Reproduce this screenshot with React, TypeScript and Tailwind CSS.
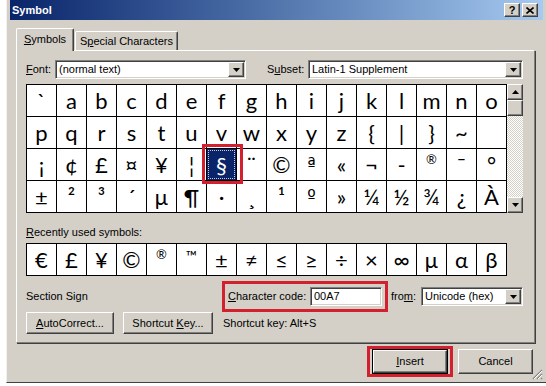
import React from 'react';

const sunken =
  'border border-t-[#808080] border-l-[#808080] border-b-white border-r-white shadow-[inset_1px_1px_0_#404040,inset_-1px_-1px_0_#d4d0c8]';
const raised =
  'border border-t-white border-l-white border-b-[#404040] border-r-[#404040] shadow-[inset_-1px_-1px_0_#808080,inset_1px_1px_0_#d4d0c8]';

const rows = [
  ['`', 'a', 'b', 'c', 'd', 'e', 'f', 'g', 'h', 'i', 'j', 'k', 'l', 'm', 'n', 'o'],
  ['p', 'q', 'r', 's', 't', 'u', 'v', 'w', 'x', 'y', 'z', '{', '|', '}', '~', ''],
  ['¡', '¢', '£', '¤', '¥', '¦', '§', '¨', '©', 'ª', '«', '¬', '-', '®', '¯', '°'],
  ['±', '²', '³', '´', 'µ', '¶', '·', '¸', '¹', 'º', '»', '¼', '½', '¾', '¿', 'À'],
];

const recent = ['€', '£', '¥', '©', '®', '™', '±', '≠', '≤', '≥', '÷', '×', '∞', 'µ', 'α', 'β'];

// glyphs that the dialog's font draws smaller or differently
const special: Record<string, string> = {
  '®': 'text-[13px] pb-[10px]',
  '™': 'text-[15px] pb-[6px]',
  'ª': "font-['DejaVu_Sans',sans-serif] text-[18px]",
  'º': "font-['DejaVu_Sans',sans-serif] text-[18px]",
};

function Arrow({ up }: { up?: boolean }) {
  return (
    <svg width="7" height="4" viewBox="0 0 7 4">
      <path d={up ? 'M3.5 0L7 4H0z' : 'M0 0h7L3.5 4z'} fill="#000" />
    </svg>
  );
}

function Select({ value, w }: { value: string; w: string }) {
  return (
    <div className={`flex h-[19px] items-center bg-white p-[1px] ${w} ${sunken}`}>
      <span className="flex-1 pl-[2px] leading-none">{value}</span>
      <div className={`flex h-[15px] w-[16px] items-center justify-center bg-[#d4d0c8] ${raised}`}>
        <Arrow />
      </div>
    </div>
  );
}

function Cell({ ch, selected }: { ch: string; selected?: boolean }) {
  return (
    <div
      className={`flex h-[32px] w-[30px] items-center justify-center border-r border-b border-black text-[22px] leading-none ${
        selected ? 'bg-[#0a246a] p-[1px] text-white' : 'bg-white text-black'
      }`}
    >
      {selected ? (
        <div className="flex h-full w-full items-center justify-center border border-dotted border-[#c8cde0]">{ch}</div>
      ) : (
        <span className={special[ch] ?? ''}>{ch}</span>
      )}
    </div>
  );
}

export default function App() {
  return (
    <div className="h-[386px] w-[546px] overflow-hidden bg-white font-['Liberation_Sans',Arial,sans-serif] text-[11px] text-black">
      <div className="relative ml-[6px] h-[383px] w-[540px] border-b border-l border-b-[#404040] border-l-[#f0f0f0] bg-[#d4d0c8] pr-[3px] pl-[3px]">
        {/* title bar */}
        <div className="flex h-[20px] items-center bg-linear-to-r from-[#0a246a] to-[#a6caf0] pr-[5px] pl-[2px]">
          <span className="flex-1 font-bold text-white">Symbol</span>
          <div className="flex gap-[2px]">
            <div className={`flex h-[14px] w-[16px] items-center justify-center bg-[#d4d0c8] text-[11px] leading-none font-bold ${raised}`}>
              ?
            </div>
            <div className={`flex h-[14px] w-[16px] items-center justify-center bg-[#d4d0c8] ${raised}`}>
              <svg width="8" height="7" viewBox="0 0 8 7">
                <path d="M0.5 0.5L7.5 6.5M7.5 0.5L0.5 6.5" stroke="#000" strokeWidth="1.6" />
              </svg>
            </div>
          </div>
        </div>

        {/* tabs */}
        <div className="mt-[8px] ml-[6px] flex h-[22px] items-end">
          <div className="relative z-10 -mb-px flex h-[23px] w-[58px] items-center justify-center rounded-t-[2px] border-t border-r border-l border-t-white border-r-[#404040] border-l-white bg-[#d4d0c8] pb-[2px] shadow-[inset_-1px_0_0_#808080]">
            <span>
              <u>S</u>ymbols
            </span>
          </div>
          <div className="ml-px flex h-[19px] w-[103px] items-center justify-center rounded-t-[2px] border-t border-r border-l border-t-white border-r-[#404040] border-l-white shadow-[inset_-1px_0_0_#808080]">
            <span>
              S<u>p</u>ecial Characters
            </span>
          </div>
        </div>

        {/* panel */}
        <div className="ml-[6px] w-[519px] border border-t-white border-r-[#808080] border-b-[#808080] border-l-white pt-[9px] pr-[9px] pb-[8px] pl-[9px] shadow-[1px_1px_0_#404040]">
          <div className="flex h-[19px] items-center">
            <span className="w-[29px]">
              <u>F</u>ont:
            </span>
            <Select w="w-[191px]" value="(normal text)" />
            <span className="ml-[21px] w-[41px]">
              S<u>u</u>bset:
            </span>
            <Select w="w-[215px]" value="Latin-1 Supplement" />
          </div>

          <div className="relative mt-[5px] flex font-['Lato','DejaVu_Sans',sans-serif]">
            <div className="border-t border-l border-black">
              {rows.map((r, i) => (
                <div key={i} className="flex">
                  {r.map((c, j) => (
                    <Cell key={j} ch={c} selected={i === 2 && j === 6} />
                  ))}
                </div>
              ))}
            </div>
            <div className="flex h-[129px] w-[16px] flex-col">
              <div className={`flex h-[16px] w-[16px] items-center justify-center bg-[#d4d0c8] ${raised}`}>
                <Arrow up />
              </div>
              <div className={`h-[16px] w-[16px] bg-[#d4d0c8] ${raised}`} />
              <div className="flex-1 bg-[image:repeating-conic-gradient(#d4d0c8_0_25%,#ffffff_0_50%)] bg-[length:2px_2px]" />
              <div className={`flex h-[16px] w-[16px] items-center justify-center bg-[#d4d0c8] ${raised}`}>
                <Arrow />
              </div>
            </div>
            <div className="absolute top-[60px] left-[176px] h-[40px] w-[41px] border-[3px] border-[#d3202f]" />
          </div>

          <div className="mt-[13px] h-[13px] leading-[13px]">
            <u>R</u>ecently used symbols:
          </div>
          <div className="mt-[4px] flex w-[481px] border-t border-l border-black font-['Lato','DejaVu_Sans',sans-serif]">
            {recent.map((c, i) => (
              <Cell key={i} ch={c} />
            ))}
          </div>

          <div className="mt-[5px] flex h-[31px] items-center">
            <span className="w-[196px]">Section Sign</span>
            <div className="flex h-[31px] items-center border-[3px] border-[#d3202f] px-[3px]">
              <span className="w-[82px]">
                <u>C</u>haracter code:
              </span>
              <div className={`flex h-[19px] w-[72px] items-center bg-white pl-[3px] ${sunken}`}>00A7</div>
            </div>
            <span className="ml-[3px] w-[30px]">
              fro<u>m</u>:
            </span>
            <Select w="w-[102px]" value="Unicode (hex)" />
          </div>

          <div className="flex h-[22px] items-center">
            <div className={`flex h-[22px] w-[88px] items-center justify-center bg-[#d4d0c8] ${raised}`}>
              <span>
                <u>A</u>utoCorrect...
              </span>
            </div>
            <div className={`ml-[9px] flex h-[22px] w-[90px] items-center justify-center bg-[#d4d0c8] ${raised}`}>
              <span>
                Shortcut <u>K</u>ey...
              </span>
            </div>
            <span className="ml-[10px]">Shortcut key: Alt+S</span>
          </div>
        </div>

        {/* bottom buttons */}
        <div className="mt-[3px] flex h-[31px] items-center justify-end pr-[10px]">
          <div className="flex h-[31px] w-[86px] items-center justify-center border-[3px] border-[#d3202f]">
            <div className="h-[25px] w-[76px] border border-black">
              <div className={`flex h-full w-full items-center justify-center bg-[#d4d0c8] ${raised}`}>
                <span>
                  <u>I</u>nsert
                </span>
              </div>
            </div>
          </div>
          <div className={`ml-[5px] flex h-[25px] w-[75px] items-center justify-center bg-[#d4d0c8] ${raised}`}>
            Cancel
          </div>
        </div>

        <svg className="absolute right-[3px] bottom-[2px]" width="11" height="11" viewBox="0 0 11 11">
          <path d="M10 1L1 10M10 5L5 10M10 9L9 10" stroke="#808080" strokeWidth="1.2" />
          <path d="M10 2L2 10M10 6L6 10" stroke="#ffffff" strokeWidth="1" />
        </svg>
      </div>
    </div>
  );
}
